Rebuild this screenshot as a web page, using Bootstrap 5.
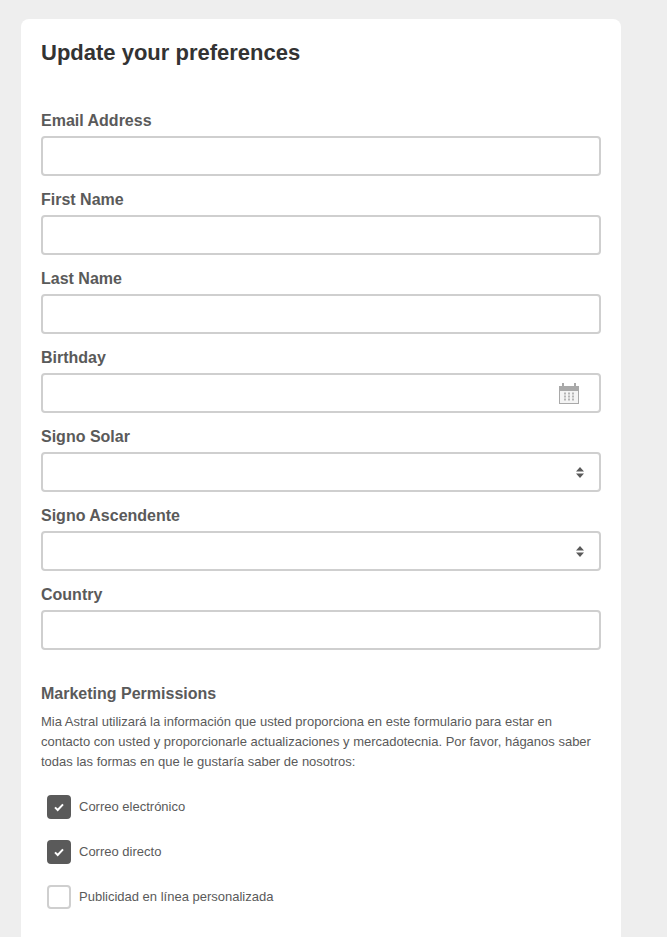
<!DOCTYPE html>
<html lang="en">
<head>
<meta charset="utf-8">
<title>Update your preferences</title>
<link href="https://cdn.jsdelivr.net/npm/bootstrap@5.3.0/dist/css/bootstrap.min.css" rel="stylesheet">
<style>
html, body { height: 937px; overflow: hidden; }
body { background: #eeeeee; font-family: "Liberation Sans", Arial, sans-serif; color: #5a5a5a; }
.pref-page { padding: 19px 46px 0 21px; }
.pref-card { background: #fff; border-radius: 8px 8px 0 0; padding: 20px 20px 40px; height: 918px; }
.pref-title { font-size: 22px; line-height: 28px; font-weight: 700; color: #333; margin: 0 0 44px; font-family: inherit; }
.pref-field { margin-bottom: 14px; }
.pref-label { display: block; font-size: 16px; line-height: 20px; font-weight: 700; color: #5a5a5a; margin: 0 0 5px; height: 20px; }
.pref-input { display: flex; align-items: center; justify-content: flex-end; width: 100%; height: 40px; border: 2px solid #cfcfcf; border-radius: 4px; background: #fff; padding: 0 19px 0 0; box-shadow: none; color: #5a5a5a; font-size: 16px; }
.pref-input:focus { border-color: #b0b0b0; box-shadow: none; }
.pref-native { position: relative; display: block; }
.pref-icon { position: absolute; top: 0; bottom: 0; margin: auto 0; pointer-events: none; }
.pref-select { appearance: none; }
.pref-heading { font-size: 16px; line-height: 20px; font-weight: 700; color: #5a5a5a; margin: 34px 0 8px; font-family: inherit; }
.pref-text { font-size: 13px; line-height: 20px; color: #5a5a5a; margin: 0 0 23px; }
.pref-checks { display: flex; flex-direction: column; gap: 21px; padding-left: 6px; }
.pref-check { display: flex; align-items: center; gap: 8px; font-size: 13px; line-height: 24px; color: #5a5a5a; margin: 0; }
.pref-box { appearance: none; width: 24px; height: 24px; margin: 0; flex: none; border: 2px solid #cfcfcf; border-radius: 4px; background: #fff center / 12px 12px no-repeat; }
.pref-box:checked { background-color: #5a5a5a; border-color: #5a5a5a; background-image: url("data:image/svg+xml,%3Csvg xmlns='http://www.w3.org/2000/svg' viewBox='0 0 12 12'%3E%3Cpath d='M2 6.4 4.7 9 10 3.4' fill='none' stroke='%23fff' stroke-width='2'/%3E%3C/svg%3E"); }
</style>
</head>
<body>
<div class="pref-page">
  <form class="pref-card">
    <h1 class="pref-title">Update your preferences</h1>
    <div class="pref-field">
      <label class="pref-label" for="f-email">Email Address</label>
      <input class="pref-input" id="f-email" type="email">
    </div>
    <div class="pref-field">
      <label class="pref-label" for="f-first">First Name</label>
      <input class="pref-input" id="f-first" type="text">
    </div>
    <div class="pref-field">
      <label class="pref-label" for="f-last">Last Name</label>
      <input class="pref-input" id="f-last" type="text">
    </div>
    <div class="pref-field">
      <label class="pref-label" for="f-birth">Birthday</label>
      <div class="pref-native">
        <input class="pref-input" id="f-birth" type="text">
        <svg class="pref-icon" style="right:22px" width="20" height="21" viewBox="0 0 20 21" aria-hidden="true">
          <path fill="#a9a9a9" d="M3 0h2v3h10V0h2v3h3v18H0V3h3z"/>
          <rect x="1" y="8" width="18" height="12" fill="#f4f4f4"/>
          <g fill="#b5b5b5">
            <rect x="5" y="9.5" width="2" height="2"/><rect x="9" y="9.5" width="2" height="2"/><rect x="13" y="9.5" width="2" height="2"/>
            <rect x="5" y="12.5" width="2" height="2"/><rect x="9" y="12.5" width="2" height="2"/><rect x="13" y="12.5" width="2" height="2"/>
            <rect x="5" y="15.5" width="2" height="2"/><rect x="9" y="15.5" width="2" height="2"/><rect x="13" y="15.5" width="2" height="2"/>
          </g>
        </svg>
      </div>
    </div>
    <div class="pref-field">
      <label class="pref-label" for="f-sun">Signo Solar</label>
      <div class="pref-native">
        <select class="pref-input pref-select" id="f-sun"><option></option></select>
        <svg class="pref-icon" style="right:17.5px" width="8" height="11" viewBox="0 0 8 11" aria-hidden="true"><path fill="#5a5a5a" d="M4 0l4 4.5H0zM0 6.5h8L4 11z"/></svg>
      </div>
    </div>
    <div class="pref-field">
      <label class="pref-label" for="f-asc">Signo Ascendente</label>
      <div class="pref-native">
        <select class="pref-input pref-select" id="f-asc"><option></option></select>
        <svg class="pref-icon" style="right:17.5px" width="8" height="11" viewBox="0 0 8 11" aria-hidden="true"><path fill="#5a5a5a" d="M4 0l4 4.5H0zM0 6.5h8L4 11z"/></svg>
      </div>
    </div>
    <div class="pref-field">
      <label class="pref-label" for="f-country">Country</label>
      <input class="pref-input" id="f-country" type="text">
    </div>
    <h2 class="pref-heading">Marketing Permissions</h2>
    <p class="pref-text">Mia Astral utilizará la información que usted proporciona en este formulario para estar en contacto con usted y proporcionarle actualizaciones y mercadotecnia. Por favor, háganos saber todas las formas en que le gustaría saber de nosotros:</p>
    <div class="pref-checks">
      <label class="pref-check"><input class="pref-box" type="checkbox" checked> Correo electrónico</label>
      <label class="pref-check"><input class="pref-box" type="checkbox" checked> Correo directo</label>
      <label class="pref-check"><input class="pref-box" type="checkbox"> Publicidad en línea personalizada</label>
    </div>
  </form>
</div>
<script src="https://cdn.jsdelivr.net/npm/bootstrap@5.3.0/dist/js/bootstrap.bundle.min.js"></script>
</body>
</html>
